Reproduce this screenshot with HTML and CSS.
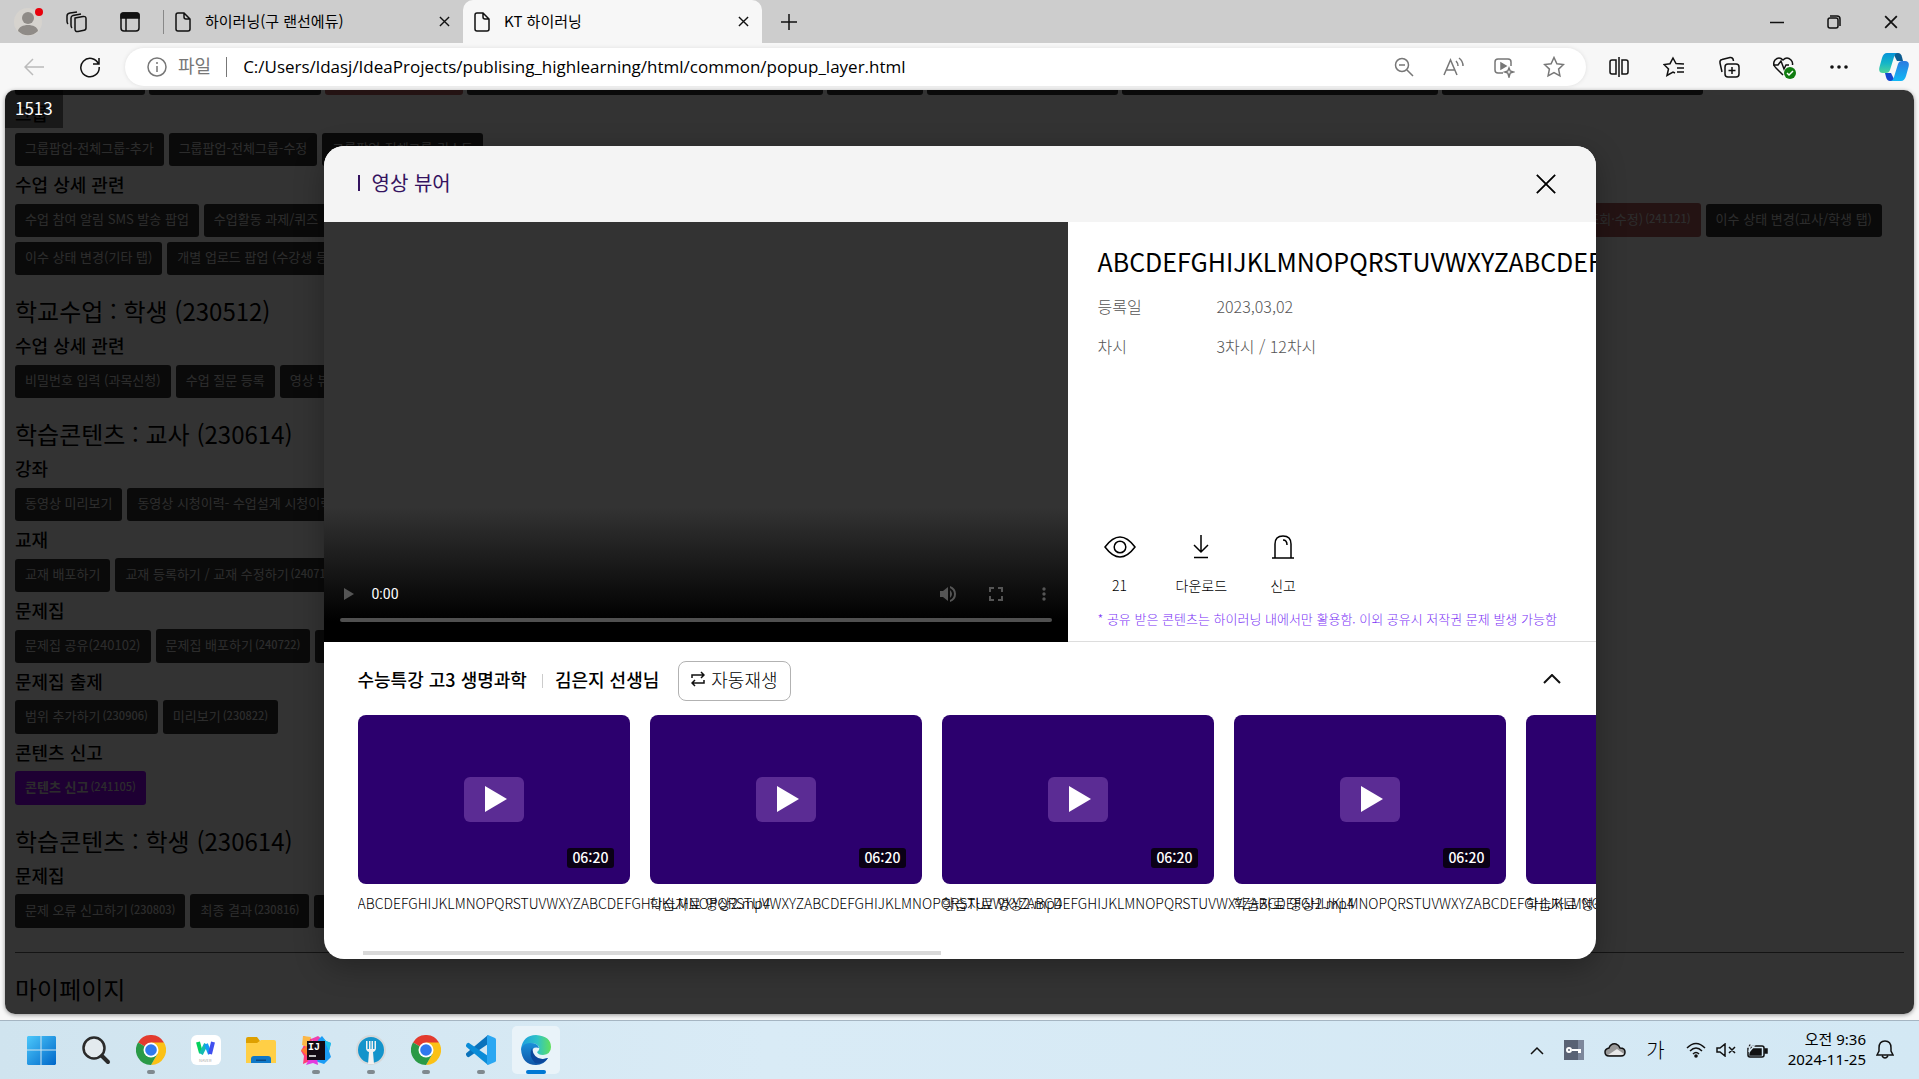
FILE: index.html
```html
<!DOCTYPE html>
<html lang="ko">

<head>
    <meta charset="UTF-8">
    <meta name="viewport" content="width=device-width, initial-scale=1.0">
    <title>KT 하이러닝</title>
    <link rel="stylesheet" href="styles.css">
</head>

<body>
    <!-- shared icons -->
    <svg class="defs" width="0" height="0" aria-hidden="true">
        <symbol id="file" viewBox="0 0 16 20">
            <path d="M3 1h6l6 6v10a2 2 0 0 1-2 2H3a2 2 0 0 1-2-2V3a2 2 0 0 1 2-2zM9 1v4a2 2 0 0 0 2 2h4" />
        </symbol>
        <symbol id="x" viewBox="0 0 12 12">
            <path d="M1 1l10 10M11 1L1 11" />
        </symbol>
        <symbol id="chrome" viewBox="0 0 30 30">
            <path fill="#e33b2e" stroke="none" d="M15 15L2 7.500A15 15 0 0 1 28 7.500z" />
            <path fill="#fbc116" stroke="none" d="M15 7.500H28A15 15 0 0 1 15 30l6.500-11.300z" />
            <path fill="#2a9a47" stroke="none" d="M2 7.500A15 15 0 0 0 15 30l6.500-11.300L15 15z" />
            <circle cx="15" cy="15" r="7.500" fill="#fff" stroke="none" />
            <circle cx="15" cy="15" r="5.800" fill="#3079ee" stroke="none" />
        </symbol>
    </svg>

    <header class="tabs">
        <button class="profile" aria-label="프로필">
            <svg width="30" height="32" viewBox="0 0 30 32">
                <circle cx="14" cy="16" r="14" fill="#d6d3ce" stroke="none" />
                <circle cx="14" cy="12" r="6" fill="#8f8b87" stroke="none" />
                <path d="M4 25c1-8 19-8 20 0a14 14 0 0 1-20 0z" fill="#8f8b87" stroke="none" />
                <circle cx="25" cy="6" r="4" fill="#e8000b" stroke="none" />
            </svg>
        </button>
        <button class="tool-workspace" aria-label="작업 영역">
            <svg width="22" height="22" viewBox="0 0 22 22"><path d="M9 7l8-1.500q3-.5 3 2V17q0 2-2 2.300l-6 1.200q-3 .5-3-2.500zM6 17q-1-1-1-3V7q0-2 2-2.500L15 3M2 13q-1-1-1-3V5q0-2.500 3-3l7-1" /></svg>
        </button>
        <button class="tool-tabs" aria-label="탭 작업">
            <svg width="20" height="20" viewBox="0 0 20 20"><rect x="1" y="1" width="18" height="18" rx="3" /><path d="M1 3q0-2 2-2h14q2 0 2 2v3H1z" fill="#111" /><path d="M6 6v13" /></svg>
        </button>
        <span class="tabs-line"></span>
        <div class="tab">
            <svg width="16" height="20"><use href="#file" /></svg>
            <span class="tab-title">하이러닝(구 랜선에듀)</span>
            <button aria-label="탭 닫기"><svg width="11" height="11"><use href="#x" /></svg></button>
        </div>
        <div class="tab active">
            <svg width="16" height="20"><use href="#file" /></svg>
            <span class="tab-title">KT 하이러닝</span>
            <button aria-label="탭 닫기"><svg width="11" height="11"><use href="#x" /></svg></button>
        </div>
        <button class="new-tab" aria-label="새 탭"><svg width="18" height="18" viewBox="0 0 18 18"><path d="M9 1v16M1 9h16" /></svg></button>
        <div class="window-buttons">
            <button aria-label="최소화"><svg width="14" height="14" viewBox="0 0 14 14"><path d="M0 7.500h14" /></svg></button>
            <button aria-label="이전 크기로"><svg width="14" height="14" viewBox="0 0 14 14"><rect x="1" y="3" width="10" height="10" rx="2" /><path d="M3 1h7q3 0 3 3v7" /></svg></button>
            <button aria-label="닫기"><svg width="14" height="14"><use href="#x" /></svg></button>
        </div>
    </header>

    <nav class="toolbar">
        <button class="back" aria-label="뒤로"><svg width="20" height="18" viewBox="0 0 20 18"><path d="M9 1L1 9l8 8M1 9h19" /></svg></button>
        <button class="reload" aria-label="새로 고침"><svg width="22" height="22" viewBox="0 0 22 22"><path d="M19.500 8A9.200 9.200 0 1 0 20.200 11M20 2v6h-6" /></svg></button>
        <div class="omnibox">
            <svg width="20" height="20" viewBox="0 0 20 20"><circle cx="10" cy="10" r="9" /><path d="M10 9v6M10 5v2" /></svg>
            <label for="url">파일</label>
            <span class="omnibox-line"></span>
            <input type="text" id="url" value="C:/Users/ldasj/IdeaProjects/publising_highlearning/html/common/popup_layer.html">
            <div class="omnibox-icons">
                <button aria-label="축소"><svg width="20" height="20" viewBox="0 0 20 20"><circle cx="8" cy="8" r="6.500" /><path d="M13 13l6 6M5 8h6" /></svg></button>
                <button aria-label="소리내어 읽기"><svg width="22" height="20" viewBox="0 0 22 20"><path d="M1 18L7.500 3 14 18M3.500 13h8M13 4q2 2 2 5M16 1q4 3 4 8" /></svg></button>
                <button aria-label="비디오"><svg width="22" height="22" viewBox="0 0 22 22"><path d="M10 17H5q-3 0-3-3V6q0-3 3-3h10q3 0 3 3v4M16 12l1.200 3 3 1-3 1-1.200 4-1.200-4-3-1 3-1z" /><path d="M8 7v6l5-3z" fill="#777" /></svg></button>
                <button aria-label="즐겨찾기 추가"><svg width="22" height="22" viewBox="0 0 22 22"><path d="M11 1.500l2.900 6.200 6.600.8-4.900 4.600 1.300 6.700L11 16.500l-5.900 3.300 1.300-6.700L1.500 8.500l6.600-.8z" /></svg></button>
            </div>
        </div>
        <div class="toolbar-icons">
            <button aria-label="화면 분할"><svg width="20" height="20" viewBox="0 0 20 20"><path d="M6 3H3q-2 0-2 2v10q0 2 2 2h3M14 3h3q2 0 2 2v10q0 2-2 2h-3M10 0v20M6 3h1v14H6M14 3h-1v14h1" /></svg></button>
            <button aria-label="즐겨찾기"><svg width="22" height="22" viewBox="0 0 22 22"><path d="M12 17l-2-1-6 3.500L5.500 13 1 8.500l6-.8L10 2l3 5.500 8 .5M14 12h7M14 16h7" /></svg></button>
            <button aria-label="컬렉션"><svg width="22" height="22" viewBox="0 0 22 22"><rect x="7" y="8" width="14" height="13" rx="3" /><path d="M14 11v7M10.500 14.500h7M4 16l-2-9q-.5-3 2-3.500l8-2q3-.5 3.500 3.500" /></svg></button>
            <button aria-label="브라우저 필수 요소"><svg width="24" height="24" viewBox="0 0 24 24"><path d="M11 20L4 13q-4-4-1-8 4-4 8 0 4-4 8 0 2 2 1.500 5M1 10h5l3-4 3 8 2-4h3" /><circle cx="18" cy="18" r="6" fill="#107c10" stroke="none" /><path d="M15 18l2 2 4-4" stroke="#fff" /></svg></button>
            <button aria-label="설정 및 기타"><svg width="18" height="6" viewBox="0 0 18 6"><g fill="#111" stroke="none"><circle cx="2" cy="3" r="1.800" /><circle cx="9" cy="3" r="1.800" /><circle cx="16" cy="3" r="1.800" /></g></svg></button>
            <button aria-label="Copilot">
                <svg width="30" height="28" viewBox="0 0 30 28">
                    <defs>
                        <linearGradient id="cp1" x1="0" y1="0" x2="0" y2="1"><stop offset="0" stop-color="#0693d8" /><stop offset=".5" stop-color="#14b5c8" /><stop offset="1" stop-color="#4fd59a" /></linearGradient>
                        <linearGradient id="cp2" x1="0" y1="0" x2="0" y2="1"><stop offset="0" stop-color="#2b7be0" /><stop offset="1" stop-color="#10b8f5" /></linearGradient>
                    </defs>
                    <g stroke="none">
                        <path d="M14 0h5q3 0 4 4l1 4h-6z" fill="#0c5c90" />
                        <path d="M16 28h-5q-3 0-4-4l-1-4h6z" fill="#1348cf" />
                        <path d="M8 0h11q-3 0-4 4l-4 13q-1 3-4 3H4q-5 0-3.500-6l2.500-9q1.500-5 5-5z" fill="url(#cp1)" />
                        <path d="M22 28H11q3 0 4-4l4-13q1-3 4-3h3q5 0 3.500 6L27 23q-1.500 5-5 5z" fill="url(#cp2)" />
                    </g>
                </svg>
            </button>
        </div>
    </nav>

    <div class="viewport">
        <main class="page">
            <div class="cut-row">
                <button class="btn" aria-label="팝업 1"></button>
                <button class="btn" aria-label="팝업 2"></button>
                <button class="btn red" aria-label="팝업 3"></button>
                <button class="btn" aria-label="팝업 4"></button>
                <button class="btn" aria-label="팝업 5"></button>
                <button class="btn" aria-label="팝업 6"></button>
                <button class="btn" aria-label="팝업 7"></button>
                <button class="btn" aria-label="팝업 8"></button>
            </div>

            <h3>그룹</h3>
            <div class="row">
                <button class="btn">그룹팝업-전체그룹-추가</button>
                <button class="btn">그룹팝업-전체그룹-수정</button>
                <button class="btn">그룹팝업-전체그룹-리스트</button>
            </div>
            <h3>수업 상세 관련</h3>
            <div class="row wide">
                <button class="btn">수업 참여 알림 SMS 발송 팝업</button>
                <button class="btn grow">수업활동 과제/퀴즈</button>
                <button class="btn red">이수 상태(조회·수정) <small>(241121)</small></button>
                <button class="btn">이수 상태 변경(교사/학생 탭)</button>
            </div>
            <div class="row next">
                <button class="btn">이수 상태 변경(기타 탭)</button>
                <button class="btn">개별 업로드 팝업 (수강생 등록)</button>
            </div>

            <h2>학교수업 : 학생 (230512)</h2>
            <h3>수업 상세 관련</h3>
            <div class="row">
                <button class="btn">비밀번호 입력 (과목신청)</button>
                <button class="btn">수업 질문 등록</button>
                <button class="btn">영상 뷰어</button>
            </div>

            <h2>학습콘텐츠 : 교사 (230614)</h2>
            <h3>강좌</h3>
            <div class="row">
                <button class="btn">동영상 미리보기</button>
                <button class="btn">동영상 시청이력- 수업설계 시청이력</button>
            </div>
            <h3>교재</h3>
            <div class="row">
                <button class="btn">교재 배포하기</button>
                <button class="btn">교재 등록하기 / 교재 수정하기 <small>(240710)</small></button>
            </div>
            <h3>문제집</h3>
            <div class="row">
                <button class="btn">문제집 공유(240102)</button>
                <button class="btn">문제집 배포하기 <small>(240722)</small></button>
                <button class="btn">문제집 등록</button>
            </div>
            <h3>문제집 출제</h3>
            <div class="row">
                <button class="btn">범위 추가하기 <small>(230906)</small></button>
                <button class="btn">미리보기 <small>(230822)</small></button>
            </div>
            <h3>콘텐츠 신고</h3>
            <div class="row">
                <button class="btn purple">콘텐츠 신고 <small>(241105)</small></button>
            </div>

            <h2>학습콘텐츠 : 학생 (230614)</h2>
            <h3>문제집</h3>
            <div class="row">
                <button class="btn">문제 오류 신고하기 <small>(230803)</small></button>
                <button class="btn">최종 결과 <small>(230816)</small></button>
                <button class="btn">최종 결과</button>
            </div>
            <hr>
            <h2>마이페이지</h2>
        </main>

        <div class="dim">
            <section class="modal" role="dialog" aria-labelledby="modal-title">
                <div class="modal-head">
                    <h1 id="modal-title">영상 뷰어</h1>
                    <button aria-label="닫기"><svg width="22" height="22"><use href="#x" /></svg></button>
                </div>

                <div class="modal-top">
                    <div class="video">
                        <div class="video-controls">
                            <button aria-label="재생"><svg width="10" height="12" viewBox="0 0 10 12"><path d="M0 0l10 6-10 6z" /></svg></button>
                            <span class="video-time">0:00</span>
                            <button aria-label="음소거"><svg width="16" height="16" viewBox="0 0 16 16"><path d="M0 5h3l5-4v14l-5-4H0zM10 4q4 4 0 8zM10 0q6 2 6 8t-6 8v-2q4-2 4-6t-4-6z" /></svg></button>
                            <button aria-label="전체화면"><svg width="14" height="14" viewBox="0 0 14 14"><path d="M0 0h5v2H2v3H0zM9 0h5v5h-2V2H9zM0 9h2v3h3v2H0zM12 9h2v5H9v-2h3z" /></svg></button>
                            <button aria-label="더보기"><svg width="4" height="14" viewBox="0 0 4 14"><circle cx="2" cy="2" r="1.700" /><circle cx="2" cy="7" r="1.700" /><circle cx="2" cy="12" r="1.700" /></svg></button>
                        </div>
                        <input type="range" min="0" max="100" value="0" aria-label="재생 위치">
                    </div>

                    <div class="info">
                        <p class="info-title">ABCDEFGHIJKLMNOPQRSTUVWXYZABCDEFGHIJKLMNOPQRSTUVWXYZ</p>
                        <dl>
                            <dt>등록일</dt>
                            <dd>2023,03,02</dd>
                            <dt>차시</dt>
                            <dd>3차시 / 12차시</dd>
                        </dl>
                        <div class="info-actions">
                            <div class="action">
                                <svg width="34" height="28" viewBox="0 0 34 28"><path d="M2 14Q17-6 32 14 17 34 2 14z" /><circle cx="17" cy="14" r="5.800" /></svg>
                                <span>21</span>
                            </div>
                            <button class="action">
                                <svg width="28" height="28" viewBox="0 0 28 28"><path d="M14 2v17M7 12l7 7 7-7M7 24.500h14" /></svg>
                                <span>다운로드</span>
                            </button>
                            <button class="action">
                                <svg width="28" height="28" viewBox="0 0 28 28"><path d="M6 25V11q0-8 8-8t8 8v14M3 25h22M14 7q4 0 4 5" /></svg>
                                <span>신고</span>
                            </button>
                        </div>
                        <p class="notice">* 공유 받은 콘텐츠는 하이러닝 내에서만 활용함. 이외 공유시 저작권 문제 발생 가능함</p>
                    </div>
                </div>

                <div class="playlist">
                    <div class="playlist-head">
                        <h2>수능특강 고3 생명과학</h2>
                        <span class="playlist-line"></span>
                        <h2>김은지 선생님</h2>
                        <button class="autoplay">
                            <svg width="14" height="16" viewBox="0 0 14 16"><path d="M1 7V4h12M10 1l3 3-3 3M13 9v3H1M4 9l-3 3 3 3" /></svg>
                            자동재생
                        </button>
                        <button class="fold" aria-label="접기"><svg width="18" height="10" viewBox="0 0 18 10"><path d="M1 9l8-8 8 8" /></svg></button>
                    </div>
                    <ul class="cards">
                        <li class="card">
                            <button class="thumb" aria-label="영상 1 재생"><span class="play"><svg width="22" height="26" viewBox="0 0 22 26"><path d="M0 0l22 13L0 26z" /></svg></span><span class="time">06:20</span></button>
                            <p>ABCDEFGHIJKLMNOPQRSTUVWXYZABCDEFGHIJKLMNOPQRSTUVWXYZABCDEFGHIJKLMNOPQRSTUVWXYZABCDEFGHIJKLMNOPQRSTUVWXYZABCDEFGHIJKLMNOPQRSTUVWXYZABCDEFGHIJKLMNOPQRSTUVWXYZ</p>
                        </li>
                        <li class="card">
                            <button class="thumb" aria-label="영상 2 재생"><span class="play"><svg width="22" height="26" viewBox="0 0 22 26"><path d="M0 0l22 13L0 26z" /></svg></span><span class="time">06:20</span></button>
                            <p>학습자료 영상2.mp4</p>
                        </li>
                        <li class="card">
                            <button class="thumb" aria-label="영상 3 재생"><span class="play"><svg width="22" height="26" viewBox="0 0 22 26"><path d="M0 0l22 13L0 26z" /></svg></span><span class="time">06:20</span></button>
                            <p>학습자료 영상2.mp4</p>
                        </li>
                        <li class="card">
                            <button class="thumb" aria-label="영상 4 재생"><span class="play"><svg width="22" height="26" viewBox="0 0 22 26"><path d="M0 0l22 13L0 26z" /></svg></span><span class="time">06:20</span></button>
                            <p>학습자료 영상2.mp4</p>
                        </li>
                        <li class="card">
                            <button class="thumb" aria-label="영상 5 재생"></button>
                            <p>학습자료 영상2.mp4</p>
                        </li>
                    </ul>
                    <div class="scrollbar"></div>
                </div>
            </section>
        </div>
        <div class="page-width">1513</div>
    </div>

    <footer class="taskbar">
        <div class="apps">
            <button aria-label="시작">
                <svg width="30" height="30" viewBox="0 0 30 30">
                    <defs><linearGradient id="win" x1="0" y1="0" x2="1" y2="1"><stop offset="0" stop-color="#4cc8fb" /><stop offset="1" stop-color="#0067c9" /></linearGradient></defs>
                    <path fill="url(#win)" stroke="none" d="M2 1h12.500v13.500H1V2zM15.500 1H29l1 1v12.500H15.500zM1 15.500h13.500V30H2l-1-1zM15.500 15.500H30V29l-1 1H15.500z" />
                </svg>
            </button>
            <button aria-label="검색"><svg width="30" height="30" viewBox="0 0 30 30"><circle cx="13" cy="13" r="10.500" fill="#e3eaee" stroke="#2a2a2a" stroke-width="2.500" /><path d="M21 21l6 6" stroke="#2a2a2a" stroke-width="4" stroke-linecap="round" /></svg></button>
            <button class="running" aria-label="Chrome"><svg width="30" height="30"><use href="#chrome" /></svg></button>
            <button aria-label="Naver Whale">
                <svg width="30" height="30" viewBox="0 0 30 30">
                    <rect width="30" height="30" rx="6" fill="#fff" stroke="none" />
                    <g fill="none" stroke-width="4"><path d="M7 7l3 11" stroke="#03d15c" /><path d="M10 19l5-10" stroke="#14bcb0" /><path d="M15 9l4 10" stroke="#149ef5" /><path d="M19 19l3-12" stroke="#4050ef" /></g>
                    <text x="8" y="27" class="naver">NAVER</text>
                </svg>
            </button>
            <button aria-label="파일 탐색기">
                <svg width="30" height="30" viewBox="0 0 30 30">
                    <g stroke="none"><path d="M0 4q0-2 2-2h9l3 4v4H0z" fill="#dea000" /><path d="M0 8h11l4-3h13q2 0 2 2v21H0z" fill="#ffcf46" /><path d="M5 28v-4q0-3 3-3h14q3 0 3 3v4z" fill="#0f78c8" /><path d="M10 24.500h10v1.500H10z" fill="#0a4a85" /></g>
                </svg>
            </button>
            <button class="running" aria-label="IntelliJ IDEA">
                <svg width="30" height="30" viewBox="0 0 30 30">
                    <g stroke="none"><path d="M2 1l9 3-2 22-7 3 1-8-3-5 3-6z" fill="#ff3d78" /><path d="M2 1l8 1-4 10-5-2z" fill="#fdb845" /><path d="M0 15l6-4v10z" fill="#ff7a2f" /><path d="M10 4l7-3 5 4-4 8z" fill="#ef3fae" /><path d="M17 5l4-4 4 5 5 2-2 8 2 6-7 7-9-3z" fill="#1b9cf5" /><path d="M22 3l3 3 5 2-2 8z" fill="#20c3e8" /><path d="M8 24l8-1 1 7-5-2-7 2z" fill="#e23ae0" /><rect x="6" y="6" width="18" height="19" fill="#130b14" /></g>
                    <text x="7" y="15" class="ij">IJ</text><path d="M8 21h7" stroke="#fff" stroke-width="1.500" />
                </svg>
            </button>
            <button class="running" aria-label="Fork">
                <svg width="30" height="30" viewBox="0 0 30 30">
                    <circle cx="15" cy="15" r="14" fill="#1494cb" stroke="#d5d8da" stroke-width="2" />
                    <path d="M10 6v7q0 3 3 4l-1 12h6l-1-12q3-1 3-4V6h-1.500v8h-1.500V6h-1.500v8h-1V6H13v8h-1.500V6z" fill="#f2f2f2" stroke="none" />
                </svg>
            </button>
            <button class="running" aria-label="Chrome 2"><svg width="30" height="30"><use href="#chrome" /></svg></button>
            <button class="running" aria-label="VS Code">
                <svg width="30" height="30" viewBox="0 0 30 30">
                    <g stroke="none"><path d="M22 0v9L3 22q-1 .5-2-.5L0 20q-.5-1 .5-2z" fill="#0a72bb" /><path d="M22 30v-9L3 8Q2 7.500 1 8.500L0 10q-.5 1 .5 2z" fill="#0a8cd8" /><path d="M22 0l7 3q1 .5 1 1.500v21q0 1-1 1.500l-7 3q-1-1-1-2V2q0-1 1-2z" fill="#2aa7f2" /></g>
                </svg>
            </button>
            <button class="running current" aria-label="Edge">
                <svg width="30" height="30" viewBox="0 0 30 30">
                    <defs>
                        <linearGradient id="edge1" x1="0" y1="0" x2="1" y2="0"><stop offset="0" stop-color="#1b9de0" /><stop offset=".55" stop-color="#2fc3c6" /><stop offset="1" stop-color="#62e05c" /></linearGradient>
                        <linearGradient id="edge2" x1="0" y1="0" x2="0" y2="1"><stop offset="0" stop-color="#1a8fd9" /><stop offset="1" stop-color="#1056a8" /></linearGradient>
                    </defs>
                    <g stroke="none">
                        <path d="M0 14Q2 0 15 0q15 1 15 12 0 7-8 8-5 0-6-3 3-2 2-5Q14 4 0 14z" fill="url(#edge1)" />
                        <path d="M0 14q2-6 9-6 8 0 9 5-7-2-7 5 1 9 16 5-4 7-12 7Q1 30 0 14z" fill="url(#edge2)" />
                        <path d="M11 13q-4 8 3 15 8 2 13-5-14 4-16-10z" fill="#0c479b" />
                    </g>
                </svg>
            </button>
        </div>
        <div class="tray">
            <button aria-label="숨겨진 아이콘"><svg width="14" height="9" viewBox="0 0 14 9"><path d="M1 8l6-6 6 6" /></svg></button>
            <button aria-label="보안 키"><svg width="20" height="20" viewBox="0 0 20 20"><path d="M0 0h20v20H0z" fill="#596274" stroke="none" /><path d="M14 0h6v20h-6z" fill="#7d879b" stroke="none" /><circle cx="5" cy="10" r="2" stroke="#fff" stroke-width="2" /><path d="M8 9h9v2H8zM14 11h3v2h-3z" fill="#fff" stroke="none" /></svg></button>
            <button aria-label="OneDrive"><svg width="22" height="16" viewBox="0 0 22 16"><path d="M5 14q-4 0-4-4 0-3 4-4 2-5 7-4 3 1 4 4 5 0 5 4t-4 4z" fill="#999" /><path d="M4 13l9-6 7 5q-1 1-3 1z" fill="#e8e8e8" stroke="none" /></svg></button>
            <button class="ime">가</button>
            <button class="status" aria-label="네트워크, 볼륨, 배터리">
                <svg width="20" height="16" viewBox="0 0 20 16"><path d="M1 6q9-9 18 0M4 9q6-6 12 0M7 12q3-3 6 0" /><circle cx="10" cy="14" r="1.800" fill="#111" stroke="none" /></svg>
                <svg width="20" height="14" viewBox="0 0 20 14"><path d="M1 5h3l5-4v12L4 9H1zM13 4l6 6M19 4l-6 6" /></svg>
                <svg width="22" height="18" viewBox="0 0 22 18"><rect x="2" y="5" width="16" height="11" rx="2" /><path d="M5 8h10v6H4z" fill="#111" /><path d="M19 8h2v4h-2z" fill="#111" /><path d="M5 0L1 6h3L3 11l5-6H5z" fill="#111" stroke="#d7e8f3" /></svg>
            </button>
            <div class="clock">오전 9:36<br>2024-11-25</div>
            <button aria-label="알림"><svg width="18" height="20" viewBox="0 0 18 20"><path d="M1 15l2-4V8q0-7 6-7t6 7v3l2 4zM6 16q3 4 6 0" /></svg></button>
        </div>
    </footer>
</body>

</html>
```
FILE: styles.css
```css
* {
    margin: 0;
    padding: 0;
    box-sizing: border-box;
}

body {
    display: flex;
    flex-direction: column;
    height: 100vh;
    overflow: hidden;
    background: #f7f7f7;
    color: #000;
    font-family: 'Noto Sans CJK KR', 'Noto Sans', sans-serif;
    font-size: 14px;
}

button {
    display: flex;
    align-items: center;
    justify-content: center;
    border: none;
    background: none;
    color: inherit;
    font: inherit;
    white-space: nowrap;
}

input {
    border: none;
    outline: none;
    font: inherit;
}

ul {
    list-style: none;
}

svg {
    flex: none;
    fill: none;
    stroke: #111;
    stroke-width: 1.5;
}

.defs {
    position: absolute;
}

/* browser tabs */
.tabs {
    display: flex;
    align-items: center;
    flex: none;
    height: 43px;
    padding-left: 14px;
    background: #cdcdcd;
}

.tool-workspace {
    margin-left: 22px;
}

.tool-tabs {
    margin-left: 32px;
}

.tabs-line {
    width: 1px;
    height: 24px;
    margin-left: 23px;
    background: #888;
}

.tab {
    display: flex;
    align-items: center;
    width: 299px;
    height: 43px;
    padding: 0 13px 0 11px;
    font-size: 15px;
}

.tab-title {
    flex: 1;
    padding-left: 14px;
    padding-bottom: 3px;
}

.active {
    border-radius: 10px 10px 0 0;
    background: #f7f7f7;
}

.new-tab {
    margin-left: 18px;
}

.window-buttons {
    display: flex;
    gap: 43px;
    margin-left: auto;
    padding-right: 21px;
}

/* address bar */
.toolbar {
    display: flex;
    align-items: center;
    flex: none;
    height: 47px;
    padding: 0 13px 0 24px;
}

.back svg {
    stroke: #bbb;
}

.reload {
    margin: 0 24px 0 35px;
}

.omnibox {
    display: flex;
    align-items: center;
    flex: 1;
    height: 38px;
    padding: 0 20px 0 22px;
    border-radius: 19px;
    background: #fff;
    box-shadow: 0 0 4px rgba(0, 0, 0, 0.1);
    font-size: 17px;
}

.omnibox svg {
    stroke: #777;
}

.omnibox label {
    padding: 0 0 3px 11px;
    color: #777;
    font-size: 18px;
}

.omnibox-line {
    width: 1px;
    height: 20px;
    margin: 0 16px 0 15px;
    background: #777;
}

.omnibox input {
    flex: 1;
    min-width: 0;
    font-family: 'Open Sans', sans-serif;
}

.omnibox-icons {
    display: flex;
    gap: 26px;
}

.toolbar-icons {
    display: flex;
    gap: 31px;
    margin-left: 21px;
}

.omnibox-icons button,
.toolbar-icons button {
    width: 24px;
}

/* page behind the popup */
.viewport {
    position: relative;
    flex: 1;
    min-height: 0;
    margin: 0 5px 6px;
    overflow: hidden;
    border-radius: 10px;
    background: #fff;
    box-shadow: 0 1px 4px rgba(0, 0, 0, 0.4);
}

.page {
    padding: 0 10px;
}

.cut-row {
    display: grid;
    grid-template-columns: 130px 172px 138px 356px 96px 191px 316px 261px;
    gap: 4px;
    height: 5px;
}

.cut-row .btn {
    height: 5px;
    border-radius: 0 0 3px 3px;
}

.page h2 {
    padding: 21px 0 1px;
    font-size: 24px;
    font-weight: 400;
    line-height: 30px;
}

.page h3 {
    padding: 1px 0;
    font-size: 18px;
    font-weight: 500;
    line-height: 35px;
}

.row {
    display: flex;
    align-items: flex-end;
    gap: 5px;
    height: 34px;
}

.wide {
    margin-right: 22px;
}

.next {
    margin-top: 4px;
}

.btn {
    height: 33px;
    padding: 0 10px 4px;
    border-radius: 3px;
    background: #333;
    color: #ddd;
    font-size: 13px;
}

.btn:has(small) {
    height: 34px;
}

.btn small {
    padding-left: 2px;
    font-size: 11px;
    font-weight: 500;
}

.grow {
    flex: 1;
    justify-content: flex-start;
}

.red {
    background: #b45f5f;
}

.purple {
    background: #9600ff;
    font-weight: 700;
}

.page hr {
    height: 1px;
    margin-top: 24px;
    border: none;
    background: #666;
}

.page-width {
    position: absolute;
    top: 0;
    left: 0;
    padding: 0 10px 2px;
    background: rgba(0, 0, 0, 0.5);
    color: #fff;
    font-size: 17px;
    line-height: 36px;
}

/* popup */
.dim {
    position: absolute;
    inset: 0;
    display: flex;
    align-items: center;
    justify-content: center;
    background: rgba(0, 0, 0, 0.8);
}

.modal {
    width: 90%;
    max-width: 1272px;
    overflow: hidden;
    border-radius: 20px;
    background: #fff;
    box-shadow: 0 8px 30px rgba(0, 0, 0, 0.3);
}

.modal-head {
    display: flex;
    align-items: center;
    justify-content: space-between;
    height: 76px;
    padding: 0 39px 0 34px;
    background: #f4f4f4;
}

.modal-head h1 {
    display: flex;
    align-items: center;
    gap: 12px;
    padding-bottom: 2px;
    color: #34135f;
    font-size: 20px;
    font-weight: 400;
}

.modal-head h1::before {
    width: 2px;
    height: 16px;
    background: #34135f;
    content: '';
}

.modal-head svg {
    stroke: #000;
    stroke-width: 1;
}

.modal-top {
    display: grid;
    grid-template-columns: minmax(0, 744fr) minmax(0, 528fr);
}

.video {
    display: flex;
    flex-direction: column;
    justify-content: flex-end;
    height: 420px;
    padding: 0 16px 20px;
    background: linear-gradient(#333 68%, #000 95%);
}

.video-controls {
    display: flex;
    align-items: center;
    gap: 24px;
    height: 48px;
}

.video-controls button {
    width: 24px;
}

.video-controls button:first-child {
    width: 18px;
}

.video-controls button:last-child {
    width: 16px;
    margin-left: 4px;
}

.video-controls svg {
    fill: #555;
    stroke: none;
}

.video-time {
    flex: 1;
    margin-left: -10px;
    color: #fff;
    font-family: Roboto, sans-serif;
    font-size: 14px;
}

.video input {
    width: 100%;
    height: 4px;
    border-radius: 2px;
    background: #505050;
    appearance: none;
}

.video input::-webkit-slider-thumb {
    width: 0;
    appearance: none;
}

.info {
    display: flex;
    flex-direction: column;
    height: 420px;
    padding: 19px 0 12px 30px;
    overflow: hidden;
    border-bottom: 1px solid #ddd;
}

.info-title {
    font-size: 25px;
    line-height: 40px;
}

.info dl {
    display: grid;
    grid-template-columns: 119px 1fr;
    margin-top: 5px;
    color: #555;
    font-size: 16px;
    font-weight: 300;
    line-height: 40px;
}

.info-actions {
    display: flex;
    gap: 34px;
    margin-top: auto;
}

.action {
    display: flex;
    flex-direction: column;
    align-items: center;
    gap: 14px;
    min-width: 44px;
    font-size: 14px;
    font-weight: 300;
    line-height: 20px;
}

.action svg {
    stroke: #000;
}

.notice {
    margin-top: 14px;
    color: #7a30f5;
    font-size: 13px;
    font-weight: 300;
    line-height: 20px;
    white-space: nowrap;
}

.playlist {
    padding: 19px 0 4px 34px;
}

.playlist-head {
    display: flex;
    align-items: center;
    height: 40px;
    padding-right: 35px;
}

.playlist-head h2 {
    padding-bottom: 3px;
    font-size: 18px;
    font-weight: 500;
}

.playlist-line {
    width: 1px;
    height: 14px;
    margin: 0 12px 0 15px;
    background: #ccc;
}

.autoplay {
    gap: 6px;
    height: 40px;
    margin-left: 19px;
    padding: 0 12px 3px;
    border: 1px solid #b2b2b2;
    border-radius: 8px;
    font-size: 18px;
    font-weight: 300;
}

.fold {
    margin-left: auto;
    padding-bottom: 3px;
}

.fold svg {
    stroke-width: 2;
}

.cards {
    display: flex;
    gap: 20px;
    margin-top: 14px;
    overflow: hidden;
}

.card {
    flex: none;
    width: 272px;
}

.thumb {
    position: relative;
    width: 100%;
    height: 169px;
    border-radius: 8px;
    background: #2c006e;
}

.play {
    display: flex;
    align-items: center;
    justify-content: center;
    width: 60px;
    height: 45px;
    padding-left: 5px;
    border-radius: 6px;
    background: #5b2c94;
}

.play svg {
    fill: #fff;
    stroke: none;
}

.time {
    position: absolute;
    right: 16px;
    bottom: 16px;
    padding: 0 5px 2px;
    border-radius: 3px;
    background: #0a0016;
    color: #fff;
    font-size: 14px;
    font-weight: 500;
    line-height: 18px;
}

.card p {
    margin-top: 8px;
    font-size: 14px;
    font-weight: 300;
    line-height: 22px;
    white-space: nowrap;
}

.scrollbar {
    width: 578px;
    height: 4px;
    margin: 37px 0 0 5px;
    background: #d9d9d9;
}

/* windows taskbar */
.taskbar {
    display: flex;
    justify-content: space-between;
    flex: none;
    height: 59px;
    padding: 0 25px 0 17px;
    border-top: 1px solid #a5b5c2;
    background: linear-gradient(90deg, #d0e4ef, #d9ebf6 40%, #d3e8f4);
}

.apps {
    display: flex;
    align-items: center;
    gap: 7px;
}

.apps button {
    position: relative;
    width: 48px;
    height: 48px;
    border-radius: 5px;
}

.apps .current {
    background: #e9f3f9;
}

.running::after {
    position: absolute;
    bottom: 0;
    width: 8px;
    height: 4px;
    border-radius: 2px;
    background: #7f898f;
    content: '';
}

.current::after {
    width: 20px;
    background: #0078d4;
}

.naver {
    fill: #aaa;
    stroke: none;
    font-size: 4px;
}

.ij {
    fill: #fff;
    stroke: none;
    font: bold 10px 'Liberation Mono', monospace;
}

.tray {
    display: flex;
    align-items: center;
    gap: 20px;
}

.ime {
    padding-bottom: 2px;
    font-size: 20px;
    font-weight: 300;
}

.status {
    gap: 10px;
    margin-left: 1px;
}

.clock {
    padding-bottom: 2px;
    font-family: 'Noto Sans', 'Noto Sans CJK KR', sans-serif;
    font-size: 15px;
    line-height: 20px;
    text-align: right;
}

.tray .clock + button {
    margin-left: -10px;
}
```
